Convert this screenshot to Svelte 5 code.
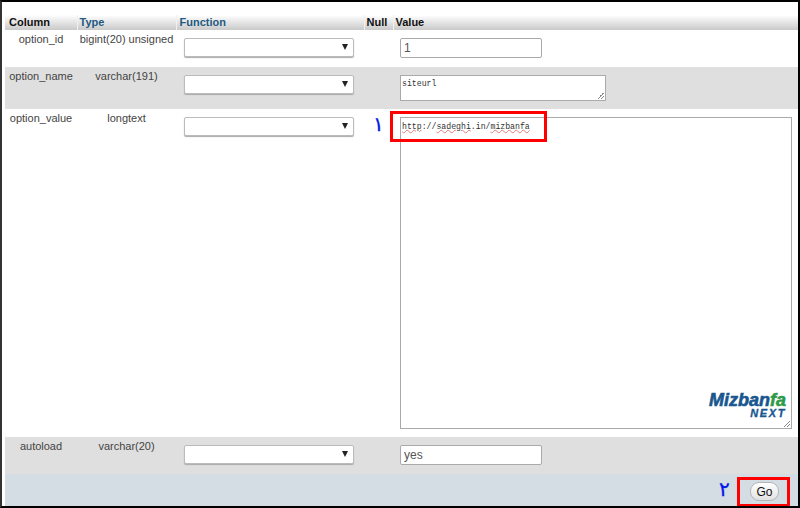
<script>
  const rows = [
    { name: "option_id", type: "bigint(20) unsigned", kind: "input", value: "1", h: 37 },
    { name: "option_name", type: "varchar(191)", kind: "small", value: "siteurl", h: 42 },
    { name: "option_value", type: "longtext", kind: "big", h: 328 },
    { name: "autoload", type: "varchar(20)", kind: "input", value: "yes", h: 37 }
  ];
</script>

<div class="frame">
  <table>
    <colgroup>
      <col style="width: 72px" />
      <col style="width: 99px" />
      <col style="width: 188px" />
      <col style="width: 29px" />
      <col />
    </colgroup>
    <thead>
      <tr>
        <th>Column</th>
        <th class="link">Type</th>
        <th class="link">Function</th>
        <th>Null</th>
        <th>Value</th>
      </tr>
    </thead>
    <tbody>
      {#each rows as row, i}
        <tr class:grey={i % 2 === 1 || i === 3} style="height: {row.h}px">
          <td class="name">{row.name}</td>
          <td class="name">{row.type}</td>
          <td class="ctl func"><div class="select"></div></td>
          <td class="null"></td>
          <td class="ctl">
            {#if row.kind === "input"}
              <input class="text" value={row.value} />
            {:else if row.kind === "small"}
              <div class="area small">{row.value}</div>
            {:else}
              <div class="area big">
                <span class="bad">http</span>://<span class="bad">sadeghi</span>.in/<span class="bad">mizbanfa</span>
                <div class="logo">
                  <div class="brand">Mizban<span>fa</span></div>
                  <div class="next">NEXT</div>
                </div>
              </div>
            {/if}
          </td>
        </tr>
      {/each}
    </tbody>
  </table>
  <div class="footer">
    <button>Go</button>
  </div>

  <span class="digit one">۱</span>
  <span class="digit two">۲</span>
  <div class="mark url"></div>
  <div class="mark go"></div>
</div>

<style>
  :global(body) {
    margin: 0;
    background: #fff;
  }

  .frame {
    position: relative;
    box-sizing: border-box;
    width: 800px;
    height: 508px;
    padding: 13px 0 0 3px;
    border-top: 2px solid #000;
    border-left: 2px solid #333;
    border-right: 2px solid #000;
    border-bottom: 2px solid #000;
    font-family: "Liberation Sans", Arial, sans-serif;
    font-size: 11px;
    color: #444;
    overflow: hidden;
  }

  table {
    width: 793px;
    table-layout: fixed;
    border-collapse: collapse;
  }

  th {
    height: 14px;
    padding: 0 0 1px 2px;
    text-align: left;
    font-size: 11px;
    color: #111;
    background: linear-gradient(#fff, #c9c9c9);
    border-right: 1px solid #f0f0f0;
  }

  th:first-child {
    padding-left: 4px;
  }

  th:nth-child(3) {
    padding-left: 3px;
  }

  th.link {
    color: #235a81;
  }

  th:last-child {
    border-right: none;
  }

  tr.grey {
    background: #dfdfdf;
  }

  td {
    padding: 0;
    vertical-align: top;
  }

  .name {
    padding-top: 3px;
    text-align: center;
    white-space: nowrap;
  }

  .ctl {
    padding: 8px 0 0 7px;
  }

  .func {
    padding-left: 8px;
  }

  .select {
    position: relative;
    box-sizing: border-box;
    width: 170px;
    height: 19px;
    background: #fff;
    border: 1px solid #bbb;
    border-radius: 2px;
    box-shadow: 0 1px 1px #aaa;
  }

  .select::after {
    content: "";
    position: absolute;
    right: 5px;
    top: 5px;
    border-left: 3px solid transparent;
    border-right: 3px solid transparent;
    border-top: 6px solid #222;
  }

  .text {
    display: block;
    box-sizing: border-box;
    width: 142px;
    height: 20px;
    padding: 0 3px;
    background: #fff;
    border: 1px solid #aaa;
    border-radius: 2px;
    font-family: "Liberation Sans", Arial, sans-serif;
    font-size: 12px;
    color: #555;
  }

  .area {
    position: relative;
    box-sizing: border-box;
    padding: 3px 1px;
    background: #fff;
    border: 1px solid #aaa;
    font-family: "Liberation Mono", "Courier New", monospace;
    font-size: 8.2px;
    line-height: 10px;
    color: #333;
    white-space: pre-wrap;
  }

  .area::after {
    content: "";
    position: absolute;
    right: 1px;
    bottom: 1px;
    width: 7px;
    height: 7px;
    background: linear-gradient(135deg, transparent 50%, #888 50%, #888 58%, transparent 58%, transparent 72%, #888 72%, #888 80%, transparent 80%);
  }

  .small {
    width: 206px;
    height: 26px;
  }

  .big {
    width: 392px;
    height: 312px;
    padding-top: 4px;
  }

  .bad {
    text-decoration: underline wavy rgba(220, 60, 60, 0.65) 1px;
    text-underline-offset: 0;
  }

  .logo {
    position: absolute;
    right: 5px;
    bottom: 9px;
    text-align: right;
    font-family: "Liberation Sans", Arial, sans-serif;
    font-style: italic;
    font-weight: 700;
    white-space: nowrap;
  }

  .brand {
    font-size: 18px;
    line-height: 16px;
    color: #17568f;
    -webkit-text-stroke: 0.6px currentColor;
  }

  .brand span {
    color: #2f9a49;
  }

  .next {
    font-size: 11px;
    line-height: 11px;
    letter-spacing: 1.6px;
    color: #17568f;
    -webkit-text-stroke: 0.3px currentColor;
  }

  .footer {
    display: flex;
    justify-content: flex-end;
    box-sizing: border-box;
    width: 793px;
    height: 32px;
    padding: 8px 19px 0 0;
    background: #d4dce4;
  }

  button {
    box-sizing: border-box;
    width: 29px;
    height: 19px;
    padding: 0;
    background: linear-gradient(#fff, #e2e2e2);
    border: 1px solid #b5b5b5;
    border-radius: 9px;
    font-family: "Liberation Sans", Arial, sans-serif;
    font-size: 12px;
    color: #111;
  }

  .digit {
    position: absolute;
    font-family: "DejaVu Sans", sans-serif;
    font-size: 20px;
    line-height: 20px;
    color: #0018e6;
    -webkit-text-stroke: 0.3px currentColor;
  }

  .one {
    left: 371px;
    top: 112px;
  }

  .two {
    left: 717px;
    top: 477px;
  }

  .mark {
    position: absolute;
    box-sizing: border-box;
    border: 3px solid #f00;
  }

  .url {
    left: 388px;
    top: 109px;
    width: 157px;
    height: 31px;
  }

  .go {
    left: 735px;
    top: 475px;
    width: 53px;
    height: 30px;
  }
</style>
